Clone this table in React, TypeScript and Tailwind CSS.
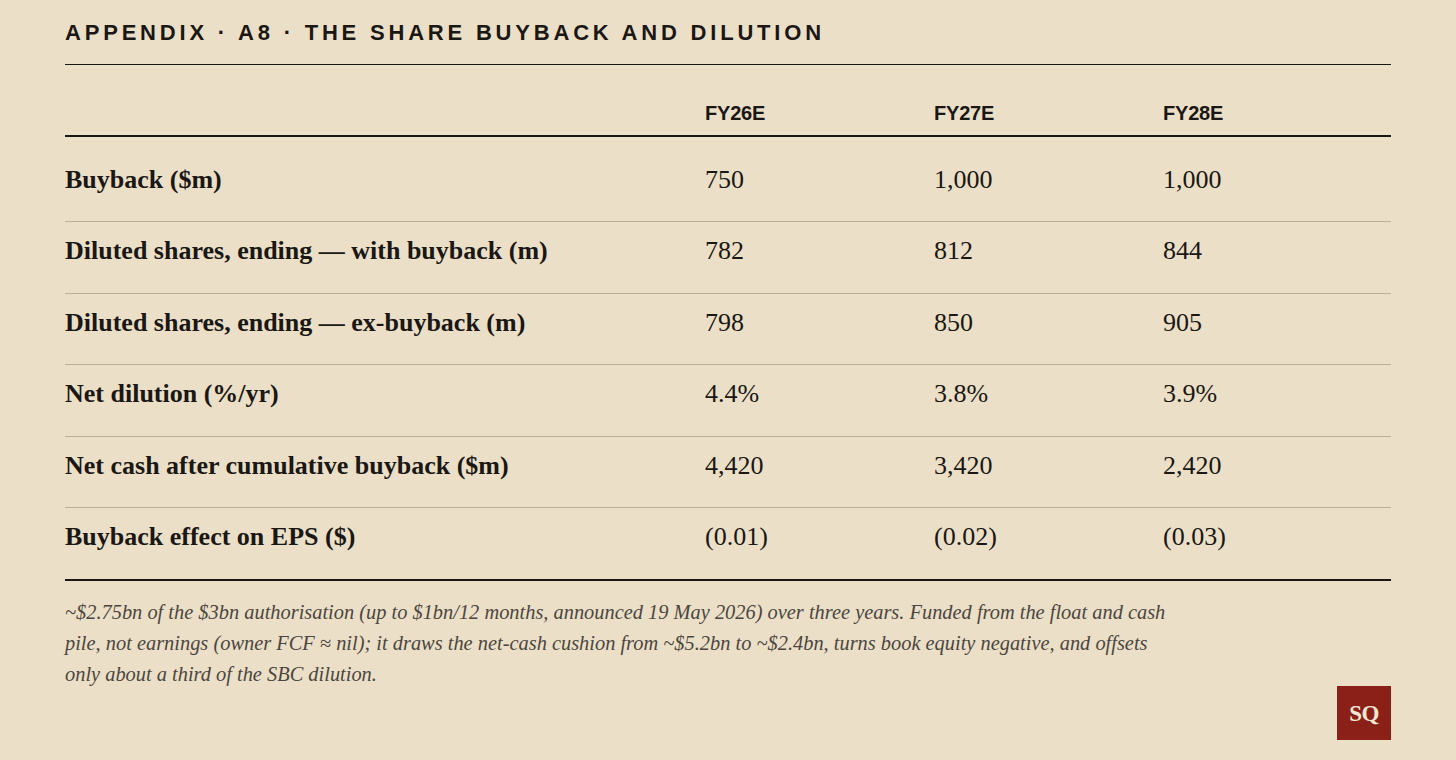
const rows = [
  { label: "Buyback ($m)", values: ["750", "1,000", "1,000"] },
  { label: "Diluted shares, ending — with buyback (m)", values: ["782", "812", "844"] },
  { label: "Diluted shares, ending — ex-buyback (m)", values: ["798", "850", "905"] },
  { label: "Net dilution (%/yr)", values: ["4.4%", "3.8%", "3.9%"] },
  { label: "Net cash after cumulative buyback ($m)", values: ["4,420", "3,420", "2,420"] },
  { label: "Buyback effect on EPS ($)", values: ["(0.01)", "(0.02)", "(0.03)"] },
];

const years = ["FY26E", "FY27E", "FY28E"];

export default function App() {
  return (
    <div className="w-full h-[760px] overflow-hidden bg-[#ebdfc7] px-[65px] pt-[21px] text-[#1a1714]">
      <h2 className="font-['Liberation_Sans',Arial,sans-serif] font-bold text-[22px] leading-[24px] tracking-[3.8px] uppercase">
        Appendix · A8 · The Share Buyback and Dilution
      </h2>

      <div className="mt-[18.5px] border-t-[1.5px] border-[#1a1714]">
        {/* header */}
        <div className="grid grid-cols-[640px_229px_229px_1fr] h-[72px] items-end pb-[10px] border-b-2 border-[#1a1714] font-['Liberation_Sans',Arial,sans-serif] font-bold text-[20px] leading-[24px] tracking-[-0.2px]">
          <div />
          {years.map((y) => (
            <div key={y}>{y}</div>
          ))}
        </div>

        {/* body */}
        <div className="font-['Liberation_Serif','Times_New_Roman',serif] text-[26px] leading-[30px]">
          {rows.map((r, i) => (
            <div
              key={r.label}
              className={`grid grid-cols-[640px_229px_229px_1fr] pb-[26.5px] ${
                i === 0 ? "pt-[28px]" : "pt-[14px]"
              } ${
                i === rows.length - 1
                  ? "border-b-2 border-[#1a1714]"
                  : "border-b border-[#b9af9d]"
              }`}
            >
              <div className="font-bold">{r.label}</div>
              {r.values.map((v, j) => (
                <div key={j}>{v}</div>
              ))}
            </div>
          ))}
        </div>
      </div>

      <p className="mt-[16.5px] max-w-[1115px] font-['Liberation_Serif','Times_New_Roman',serif] italic text-[20.4px] leading-[31px] text-[#4b463f]">
        ~$2.75bn of the $3bn authorisation (up to $1bn/12 months, announced 19 May 2026) over three
        years. Funded from the float and cash pile, not earnings (owner FCF ≈ nil); it draws the
        net-cash cushion from ~$5.2bn to ~$2.4bn, turns book equity negative, and offsets only about a
        third of the SBC dilution.
      </p>

      <div className="flex justify-end -mt-[4px]">
        <div className="w-[54px] h-[54px] bg-[#8b2019] flex items-center justify-center font-['Liberation_Serif','Times_New_Roman',serif] font-bold text-[23px] leading-none text-[#f4e8d4] tracking-[-0.5px]">
          SQ
        </div>
      </div>
    </div>
  );
}
